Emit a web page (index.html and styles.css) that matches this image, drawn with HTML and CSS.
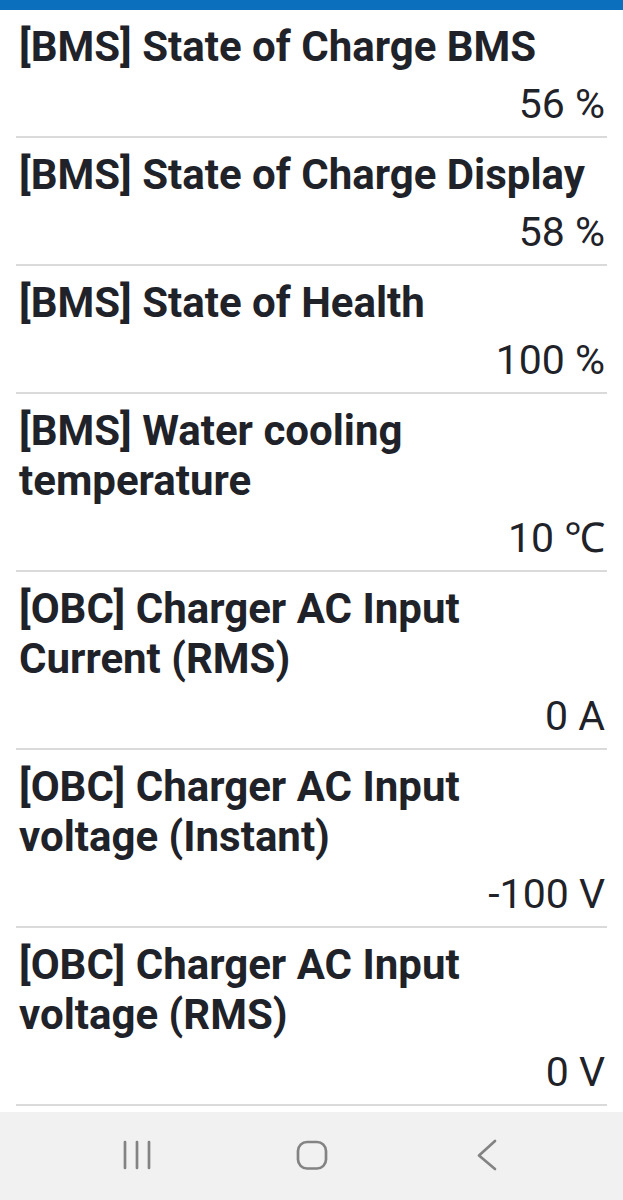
FILE: index.html
```html
<!DOCTYPE html>
<html>
<head>
    <meta charset="UTF-8" />
    <meta name="viewport" content="width=device-width, initial-scale=1.0">
    <link rel="stylesheet" href="styles.css">
</head>
<body>

    <main class="screen">

        <div class="topbar"></div>

        <ul class="list">
            <li class="item">
                <p class="item-title">[BMS] State of Charge BMS</p>
                <p class="item-value">56 %</p>
            </li>
            <li class="item">
                <p class="item-title">[BMS] State of Charge Display</p>
                <p class="item-value">58 %</p>
            </li>
            <li class="item">
                <p class="item-title">[BMS] State of Health</p>
                <p class="item-value">100 %</p>
            </li>
            <li class="item">
                <p class="item-title">[BMS] Water cooling temperature</p>
                <p class="item-value">10 ℃</p>
            </li>
            <li class="item">
                <p class="item-title">[OBC] Charger AC Input Current (RMS)</p>
                <p class="item-value">0 A</p>
            </li>
            <li class="item">
                <p class="item-title">[OBC] Charger AC Input voltage (Instant)</p>
                <p class="item-value">-100 V</p>
            </li>
            <li class="item">
                <p class="item-title">[OBC] Charger AC Input voltage (RMS)</p>
                <p class="item-value">0 V</p>
            </li>
        </ul>

        <nav class="navbar">
            <span class="nav-btn">
                <svg width="40" height="40" viewBox="0 0 40 40">
                    <path d="M8 7v26M20 7v26M32 7v26" stroke="#838383" stroke-width="2.7" fill="none" stroke-linecap="round"/>
                </svg>
            </span>
            <span class="nav-btn">
                <svg width="40" height="40" viewBox="0 0 40 40">
                    <rect x="6" y="7" width="28" height="26.5" rx="9" stroke="#838383" stroke-width="2.7" fill="none"/>
                </svg>
            </span>
            <span class="nav-btn">
                <svg width="40" height="40" viewBox="0 0 40 40">
                    <path d="M28 6L12 20.5 28 34" stroke="#838383" stroke-width="2.7" fill="none" stroke-linecap="round" stroke-linejoin="round"/>
                </svg>
            </span>
        </nav>

    </main>

</body>
</html>
```

FILE: styles.css
```css
* {
    margin: 0;
    padding: 0;
    box-sizing: border-box;
}

body {
    font-family: Roboto, "Noto Sans", sans-serif;
    color: #1f2329;
    background: #fff;
}

.screen {
    height: 100vh;
    display: flex;
    flex-direction: column;
}

.topbar {
    height: 10px;
    background: #0b6fbd;
}

.list {
    flex: 1;
    overflow: hidden;
    list-style: none;
    padding: 0 16px;
}

.item {
    padding: 12px 0 10px;
    border-bottom: 2px solid #dadada;
}

.item-title {
    padding: 0 6px 0 3px;
    font-size: 42px;
    font-weight: 700;
    line-height: 50px;
}

.item-value {
    margin-top: 10px;
    padding-right: 2px;
    font-size: 41px;
    line-height: 44px;
    text-align: right;
}

.navbar {
    height: 88px;
    background: #f1f1f1;
    display: grid;
    grid-template-columns: repeat(3, 175px);
    justify-content: center;
    align-items: center;
}

.nav-btn {
    display: flex;
    justify-content: center;
    padding-bottom: 2px;
}
```
